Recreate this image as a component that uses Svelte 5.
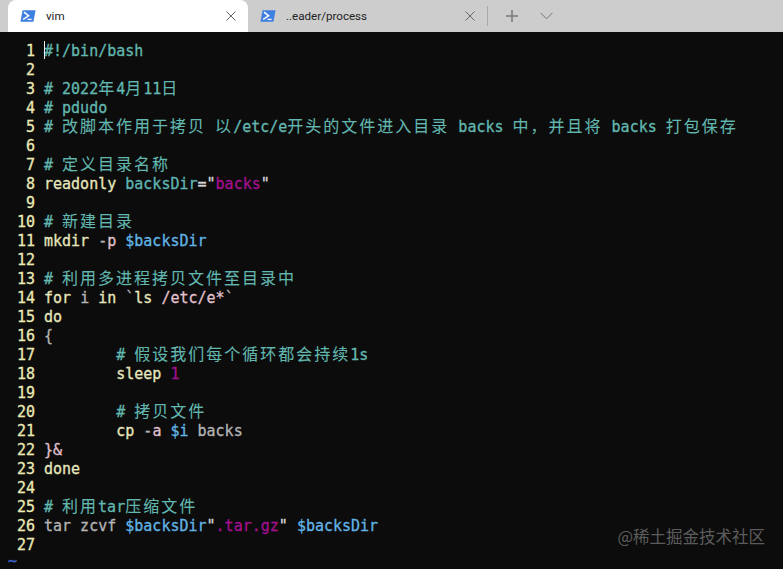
<script>
  const C = 'c', N = 'n', Y = 'y', V = 'v', S = 's', G = 'g', P = 'p', W = 'w';
  const lines = [
    [[C, '#!/bin/bash']],
    [],
    [[C, '# 2022年4月11日']],
    [[C, '# pdudo']],
    [[C, '# 改脚本作用于拷贝 以/etc/e开头的文件进入目录 backs 中，并且将 backs 打包保存']],
    [],
    [[C, '# 定义目录名称']],
    [[Y, 'readonly '], [N, 'backsDir'], [W, '="'], [S, 'backs'], [W, '"']],
    [],
    [[C, '# 新建目录']],
    [[Y, 'mkdir '], [G, '-'], [P, 'p '], [V, '$backsDir']],
    [],
    [[C, '# 利用多进程拷贝文件至目录中']],
    [[Y, 'for '], [G, 'i '], [Y, 'in '], [G, '`'], [Y, 'ls '], [P, '/etc/e*'], [G, '`']],
    [[Y, 'do']],
    [[G, '{']],
    [[C, '\t# 假设我们每个循环都会持续1s']],
    [[Y, '\tsleep '], [S, '1']],
    [],
    [[C, '\t# 拷贝文件']],
    [[Y, '\tcp '], [G, '-'], [P, 'a '], [V, '$i '], [G, 'backs']],
    [[P, '}&']],
    [[Y, 'done']],
    [],
    [[C, '# 利用tar压缩文件']],
    [[G, 'tar zcvf '], [V, '$backsDir'], [W, '"'], [S, '.tar.gz'], [W, '" '], [V, '$backsDir']],
    []
  ];
  const split = (t) => t.replace(/\t/g, '        ').split(/([\u3000-\u9fff\uff00-\uffef]+)/).filter(Boolean)
    .map((x) => ({ t: x, cjk: /[\u3000-\u9fff\uff00-\uffef]/.test(x) }));
</script>

{#snippet psIcon()}
  <svg class="ps" viewBox="0 0 16 12" width="16" height="12" aria-hidden="true">
    <path d="M2.6 0.2H15.6L13.4 11.8H0.4Z" fill="#3f7fe0" />
    <path d="M4 2.2 8.6 5.8 3.2 9.4" fill="none" stroke="#fff" stroke-width="1.5" />
    <path d="M7.6 9.4H11.6" fill="none" stroke="#fff" stroke-width="1.3" />
  </svg>
{/snippet}

{#snippet closeIcon()}
  <svg class="x" viewBox="0 0 10 10" width="10" height="10" aria-hidden="true">
    <path d="M0.5 0.5 9.5 9.5M9.5 0.5 0.5 9.5" stroke="#666" stroke-width="1" fill="none" />
  </svg>
{/snippet}

<div class="win">
  <header class="tabs">
    <div class="tab active">
      {@render psIcon()}
      <span class="title">vim</span>
      {@render closeIcon()}
    </div>
    <div class="tab second">
      {@render psIcon()}
      <span class="title">..eader/process</span>
      {@render closeIcon()}
    </div>
    <div class="sep"></div>
    <svg class="plus" viewBox="0 0 12 12" width="12" height="12" aria-hidden="true">
      <path d="M6 0V12M0 6H12" stroke="#777" stroke-width="1.5" fill="none" />
    </svg>
    <svg class="chev" viewBox="0 0 13 8" width="13" height="8" aria-hidden="true">
      <path d="M0.5 0.8 6.5 6.8 12.5 0.8" stroke="#777" stroke-width="1" fill="none" />
    </svg>
  </header>
  <main class="term">
    {#each lines as line, i}
      <div class="line">
        <span class="num">{i + 1}</span>
        <span class="code">{#if i === 0}<span class="cursor"></span>{/if}{#each line as [cls, text]}<span class={cls}>{#each split(text) as part}{#if part.cjk}<span class="cjk">{part.t}</span>{:else}{part.t}{/if}{/each}</span>{/each}</span>
      </div>
    {/each}
    <div class="line last"><span class="tilde">~</span></div>
    <div class="mark">@稀土掘金技术社区</div>
  </main>
</div>

<style>
  :global(body) { margin: 0; background: #0c0c0c; }
  .win { width: 783px; height: 569px; display: flex; flex-direction: column; overflow: hidden; background: #0c0c0c; }
  .tabs { height: 32px; flex: none; background: #cdcdcd; display: flex; align-items: flex-end; padding-left: 8px; box-sizing: border-box; font-family: Roboto, "Open Sans", sans-serif; font-size: 11.6px; color: #222; }
  .tab { width: 240px; height: 32px; box-sizing: border-box; display: flex; align-items: center; padding: 0 12px; border-radius: 8px 8px 0 0; }
  .tab.active { background: #fff; }
  .tab.second { width: 239px; }
  .ps { flex: none; margin-right: 10px; }
  .title { flex: 1; white-space: nowrap; }
  .x { flex: none; }
  .sep { width: 1px; height: 20px; background: #aaa; margin: 0 0 6px 0; }
  .plus { margin: 0 0 10px 18px; }
  .chev { margin: 0 0 12px 22px; }
  .term { position: relative; flex: 1; padding: 10px 0 0 8px; font-family: "DejaVu Sans Mono", monospace; font-size: 15px; color: #ccc; -webkit-text-stroke: 0.3px; }
  .line { height: 19px; line-height: 19px; display: flex; white-space: pre; }
  .line.last { height: 13px; line-height: 13px; }
  .num { width: 27px; text-align: right; margin-right: 9px; color: #eaeab4; flex: none; }
  .code { position: relative; white-space: pre; }
  .cursor { position: absolute; left: 0; top: -1px; width: 1px; height: 18px; background: #eee; }
  .cjk { font-family: "Noto Sans CJK SC", sans-serif; font-size: 16px; line-height: 15px; letter-spacing: 2px; -webkit-text-stroke: 0.1px; }
  .c { color: #62b8b0; }
  .n { color: #5fb4b4; }
  .y { color: #e6e6bd; }
  .g { color: #b4b4b4; }
  .w { color: #d8d8d8; }
  .v { color: #61b4e4; }
  .s { color: #a3108f; }
  .p { color: #e0c0cc; }
  .tilde { color: #3b5fc4; -webkit-text-stroke: 0.5px; }
  .mark { position: absolute; right: 18px; bottom: 22px; font-family: "Noto Sans CJK SC", sans-serif; font-size: 16.5px; line-height: 22px; color: #5c5c5c; -webkit-text-stroke: 0; }
</style>
